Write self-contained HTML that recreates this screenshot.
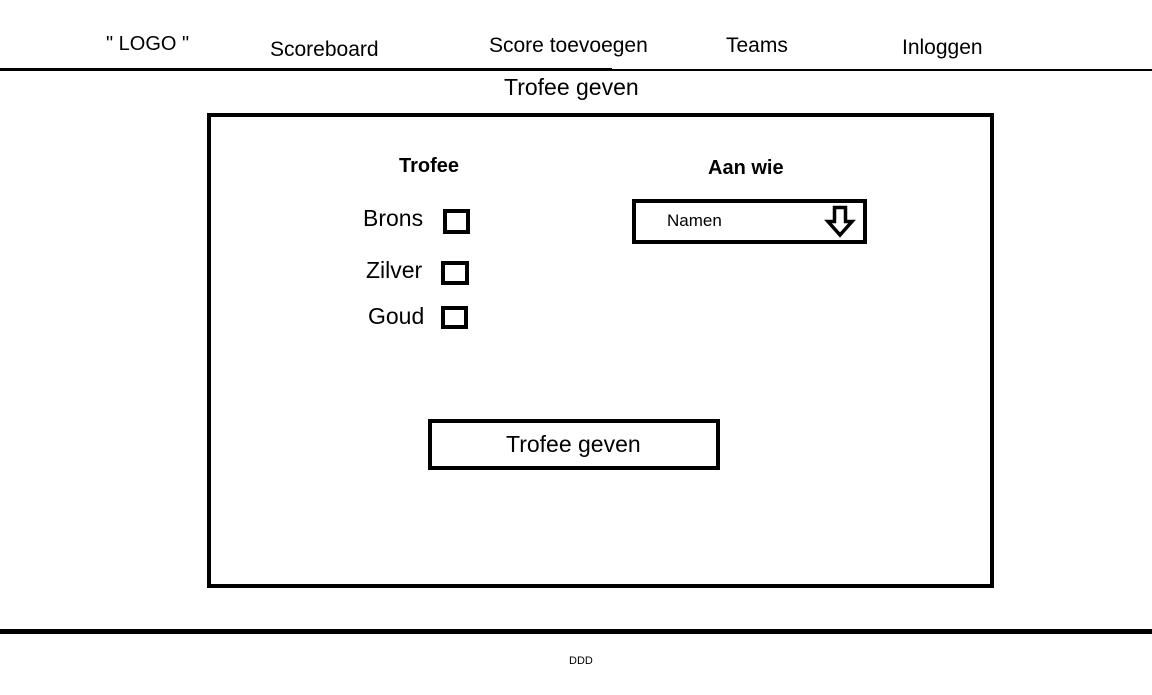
<!DOCTYPE html>
<html><head><style>
body{margin:0;width:1152px;height:695px;background:#fff;position:relative;font-family:"Liberation Sans",sans-serif;color:#000;overflow:hidden}
.t{position:absolute;white-space:nowrap}
.b{position:absolute;border:4px solid #000;box-sizing:border-box}
</style></head><body>
<div class="t" style="left:106px;top:33px;font-size:20px">" LOGO "</div>
<div class="t" style="left:270px;top:38px;font-size:21px">Scoreboard</div>
<div class="t" style="left:489px;top:34px;font-size:21px">Score toevoegen</div>
<div class="t" style="left:726px;top:34px;font-size:21px">Teams</div>
<div class="t" style="left:902px;top:36px;font-size:21px">Inloggen</div>
<div style="position:absolute;left:0;top:68px;width:612px;height:3px;background:#000"></div>
<div style="position:absolute;left:612px;top:69px;width:540px;height:2px;background:#000"></div>
<div class="t" style="left:504px;top:74px;font-size:23px">Trofee geven</div>
<div class="b" style="left:207px;top:113px;width:787px;height:475px"></div>
<div class="t" style="left:399px;top:155px;font-size:20px;font-weight:bold">Trofee</div>
<div class="t" style="left:708px;top:157px;font-size:20px;font-weight:bold">Aan wie</div>
<div class="t" style="left:363px;top:205px;font-size:23px">Brons</div>
<div class="t" style="left:366px;top:257px;font-size:23px">Zilver</div>
<div class="t" style="left:368px;top:303px;font-size:23px">Goud</div>
<div class="b" style="left:443px;top:209px;width:27px;height:25px"></div>
<div class="b" style="left:441px;top:261px;width:28px;height:24px"></div>
<div class="b" style="left:441px;top:306px;width:27px;height:23px"></div>
<div class="b" style="left:632px;top:199px;width:235px;height:45px"></div>
<div class="t" style="left:667px;top:211px;font-size:17px">Namen</div>
<svg style="position:absolute;left:820px;top:202px" width="40" height="40"><path d="M14.5 5.5H25.5V19.5H32L20 33L8 19.5H14.5Z" fill="none" stroke="#000" stroke-width="3.5" stroke-linejoin="miter"/></svg>
<div class="b" style="left:428px;top:419px;width:292px;height:51px"></div>
<div class="t" style="left:506px;top:431px;font-size:23px">Trofee geven</div>
<div style="position:absolute;left:0;top:629px;width:1152px;height:5px;background:#000"></div>
<div class="t" style="left:569px;top:655px;font-size:11px">DDD</div>
</body></html>
